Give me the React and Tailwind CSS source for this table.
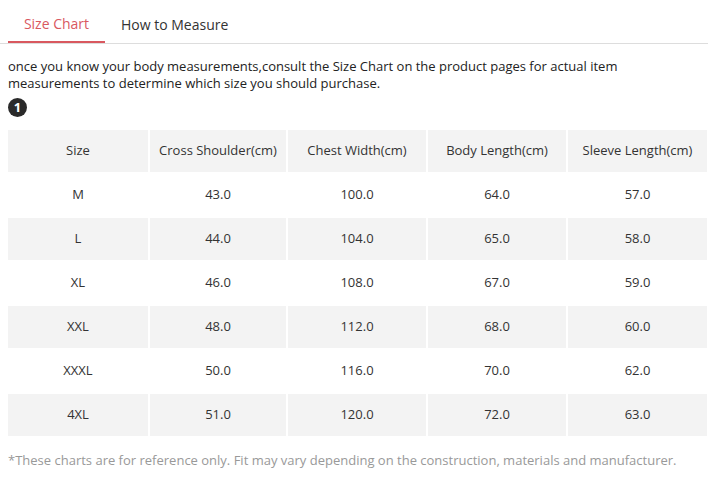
const rows = [
    ['M', '43.0', '100.0', '64.0', '57.0'],
    ['L', '44.0', '104.0', '65.0', '58.0'],
    ['XL', '46.0', '108.0', '67.0', '59.0'],
    ['XXL', '48.0', '112.0', '68.0', '60.0'],
    ['XXXL', '50.0', '116.0', '70.0', '62.0'],
    ['4XL', '51.0', '120.0', '72.0', '63.0'],
];

const headers = ['Size', 'Cross Shoulder(cm)', 'Chest Width(cm)', 'Body Length(cm)', 'Sleeve Length(cm)'];

export default function App() {
    return (
        <div className="w-[708px] h-[490px] bg-white text-[#222] font-['Open_Sans',sans-serif] overflow-hidden">
            <div className="flex border-b border-[#ddd] pl-2">
                <div className="w-[97px] h-[43px] pt-[6px] flex items-center justify-center text-[14px] text-[#d9585f] border-b-2 border-[#d9585f] -mb-px">
                    Size Chart
                </div>
                <div className="h-[43px] pt-[6px] flex items-center px-4 text-[14px] text-[#333]">
                    How to Measure
                </div>
            </div>

            <p className="px-2 pt-[14px] text-[13px] leading-[17px] text-[#222]">
                once you know your body measurements,consult the Size Chart on the product pages for actual item measurements to determine which size you should purchase.
            </p>

            <div className="px-2 mt-[6px]">
                <span className="w-[19px] h-[19px] rounded-full bg-[#2a2a2a] text-white text-[13px] font-bold flex items-center justify-center leading-none">
                    1
                </span>
            </div>

            <div className="pl-2 pr-[2px] mt-[13px]">
                <div className="grid grid-cols-[140px_136px_138px_138px_139px] gap-[2px] text-[13px] text-[#333]">
                    {headers.map((h) => (
                        <div key={h} className="h-[42px] bg-[#f3f3f3] flex items-center justify-center">
                            {h}
                        </div>
                    ))}
                    {rows.map((r, i) =>
                        r.map((c, j) => (
                            <div
                                key={`${i}-${j}`}
                                className={`h-[42px] flex items-center justify-center ${i % 2 === 1 ? 'bg-[#f3f3f3]' : 'bg-white'}`}
                            >
                                {c}
                            </div>
                        ))
                    )}
                </div>
            </div>

            <p className="px-2 mt-[15px] text-[13px] text-[#999]">
                *These charts are for reference only. Fit may vary depending on the construction, materials and manufacturer.
            </p>
        </div>
    );
}
